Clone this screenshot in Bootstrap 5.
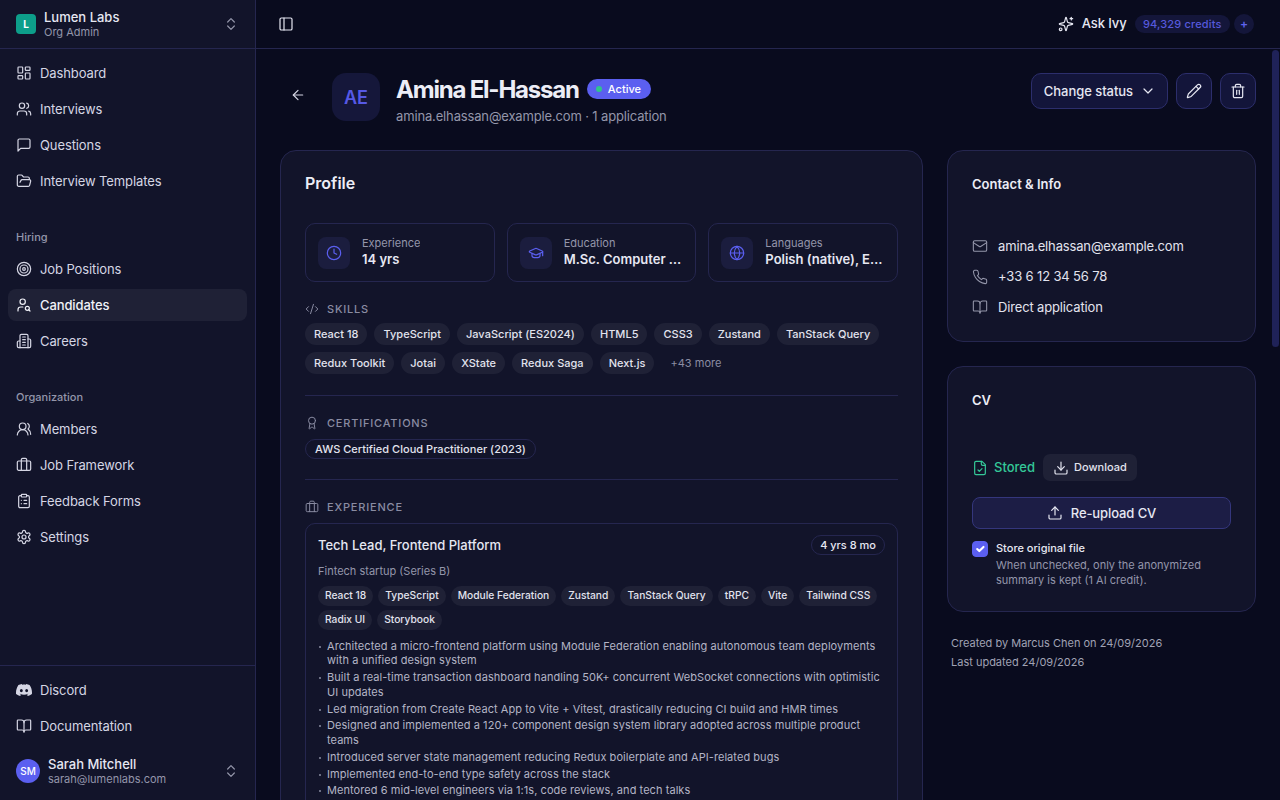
<!DOCTYPE html>
<html lang="en" data-bs-theme="dark">
<head>
  <meta charset="UTF-8" />
  <meta name="viewport" content="width=device-width, initial-scale=1" />
  <title>Amina El-Hassan | Lumen Labs</title>
  <link href="https://cdn.jsdelivr.net/npm/bootstrap@5.3.3/dist/css/bootstrap.min.css" rel="stylesheet" />
  <style>
    html, body {
      height: 100%;
      overflow: hidden;
    }

    body {
      background: #090b1e;
      color: #e6e7f2;
      font-family: Inter, "Liberation Sans", sans-serif;
      font-size: 14px;
    }

    .ico {
      width: 16px;
      height: 16px;
      flex: none;
      fill: none;
      stroke: currentColor;
      stroke-width: 1.8;
      stroke-linecap: round;
      stroke-linejoin: round;
    }

    /* sidebar */
    .side {
      width: 256px;
      flex: none;
      background: #12142a;
      border-right: 1px solid #25264f;
    }

    .side-top {
      height: 49px;
      padding: 0 16px;
      border-bottom: 1px solid #25264f;
    }

    .org-logo {
      width: 20px;
      height: 20px;
      border-radius: 4px;
      background: #0d9e8a;
      color: #fff;
      font-size: 10px;
      font-weight: 700;
    }

    .line-main {
      font-size: 13px;
      font-weight: 500;
      line-height: 14px;
      margin: 1px 0;
      color: #e6e7f2;
    }

    .line-sub {
      font-size: 11px;
      line-height: 15px;
      color: #9496aa;
    }

    .updown {
      color: #9496aa;
    }

    .side-nav {
      padding: 8px 8px 0;
      gap: 4px;
    }

    .side-nav .nav-link {
      height: 32px;
      padding: 0 8px;
      gap: 8px;
      color: #d5d6e4;
      font-size: 13px;
      letter-spacing: -.1px;
      border-radius: 8px;
      display: flex;
      align-items: center;
    }

    .side-nav .nav-link.on {
      background: #1f2136;
      color: #f0f1f8;
      font-weight: 500;
    }

    .lbl {
      padding-top: 2px;
    }

    .side-label {
      height: 32px;
      padding: 0 8px;
      margin: 20px 0 -4px;
      font-size: 11px;
      font-weight: 500;
      color: #9496aa;
      display: flex;
      align-items: center;
    }

    .side-foot {
      border-top: 1px solid #25264f;
    }

    .side-user {
      height: 58px;
      padding: 0 16px;
    }

    .user-dot {
      width: 24px;
      height: 24px;
      border-radius: 50%;
      background: #5b5ff0;
      color: #fff;
      font-size: 10px;
      font-weight: 500;
    }

    /* top bar */
    .topbar {
      height: 49px;
      flex: none;
      padding: 0 26px 0 22px;
      border-bottom: 1px solid #25264f;
    }

    .ask-ivy {
      font-size: 13px;
      font-weight: 500;
      letter-spacing: -.1px;
      color: #e6e7f2;
    }

    .credit-pill {
      height: 18px;
      padding: 0 8.5px;
      border-radius: 9px;
      background: #14163a;
      color: #5659dc;
      font-size: 11px;
      font-weight: 500;
      letter-spacing: .15px;
    }

    .plus-dot {
      width: 20px;
      height: 20px;
      border-radius: 50%;
      background: #14163a;
      color: #5f63ee;
      font-size: 12px;
      font-weight: 600;
    }

    /* scrolling column, the headless browser hides the real bar so the thumb is drawn */
    .scroller {
      overflow-y: auto;
    }

    .scroll-thumb {
      position: absolute;
      top: 50px;
      right: 1px;
      width: 7px;
      height: 297px;
      border-radius: 4px;
      background: #1f2258;
    }

    .page-wrap {
      min-height: 1899px;
      padding: 24px;
    }

    .back-btn {
      width: 36px;
      height: 44px;
      color: #d5d6e4;
    }

    .big-avatar {
      width: 48px;
      height: 48px;
      border-radius: 14px;
      background: #15173a;
      color: #5659e6;
      font-size: 18px;
      font-weight: 600;
    }

    .person-name {
      font-size: 24px;
      font-weight: 700;
      letter-spacing: -1.2px;
      line-height: 32px;
      color: #eceDF6;
      margin: 1px 0 0;
    }

    .status-pill {
      height: 20px;
      margin-top: -1px;
      padding: 0 10px 0 9px;
      border-radius: 10px;
      background: #5b5ff0;
      color: #fff;
      font-size: 11px;
      font-weight: 500;
      gap: 6px;
    }

    .status-dot {
      width: 6px;
      height: 6px;
      border-radius: 50%;
      background: #2fc48d;
    }

    .person-sub {
      font-size: 13px;
      letter-spacing: -.15px;
      line-height: 20px;
      color: #9496aa;
    }

    .act-btn {
      height: 36px;
      background: #13153a;
      border: 1px solid #2c2e6c;
      border-radius: 10px;
      color: #e6e7f2;
      font-size: 13px;
      font-weight: 500;
      letter-spacing: -.05px;
      padding: 0 11px 0 12px;
      gap: 7px;
    }

    .act-btn.square {
      width: 36px;
      padding: 0;
      justify-content: center;
    }

    .pane {
      background: #12142a;
      border: 1px solid #25264f;
      border-radius: 16px;
      padding: 24px;
      color: #e6e7f2;
    }

    .pane-title {
      font-size: 16px;
      font-weight: 600;
      line-height: 16px;
      margin-bottom: 32px;
      color: #eceDF6;
    }

    .tile-row {
      gap: 12px;
    }

    .tile {
      flex: 1 1 0;
      min-width: 0;
      height: 59px;
      padding: 0 12px;
      gap: 12px;
      border: 1px solid #25264f;
      border-radius: 10px;
    }

    .tile-ico {
      width: 32px;
      height: 32px;
      flex: none;
      border-radius: 8px;
      background: #1b1d3e;
      color: #5b5ff0;
    }

    .tile-text {
      padding-bottom: 2px;
    }

    .tile-key {
      font-size: 11px;
      line-height: 15px;
      color: #9496aa;
    }

    .tile-val {
      font-size: 13px;
      font-weight: 600;
      line-height: 17px;
      color: #e6e7f2;
    }

    .sect-head {
      margin-top: 20px;
      font-size: 11px;
      font-weight: 500;
      line-height: 14px;
      letter-spacing: .8px;
      text-transform: uppercase;
      color: #8a8ca2;
      gap: 8px;
    }

    .sect-head .ico {
      width: 14px;
      height: 14px;
      stroke-width: 1.7;
    }

    .chips {
      gap: 7px;
      margin-top: 7px;
    }

    .chips.spaced {
      margin-top: 9px;
    }

    .chip {
      height: 22px;
      padding: 0 9px;
      border-radius: 11px;
      background: #1f2136;
      color: #e2e3ee;
      font-size: 11px;
      font-weight: 500;
      letter-spacing: .02px;
    }

    .chip.more {
      background: none;
      color: #8a8ca2;
      font-weight: 400;
    }

    .chip.lined {
      height: 20px;
      background: none;
      border: 1px solid #25264f;
    }

    .sep {
      height: 1px;
      background: #25264f;
      margin: 21px 0 0;
    }

    .sep.near {
      margin-top: 20px;
    }

    .job-box {
      margin-top: 9px;
      padding: 12px;
      border: 1px solid #25264f;
      border-radius: 10px;
    }

    .job-title {
      font-size: 13px;
      font-weight: 500;
      color: #e6e7f2;
    }

    .job-time {
      height: 20px;
      padding: 0 8px;
      margin-top: -1px;
      border: 1px solid #25264f;
      border-radius: 10px;
      font-size: 11px;
      font-weight: 500;
    }

    .job-org {
      font-size: 11px;
      line-height: 14px;
      color: #9496aa;
      margin-top: 8px;
    }

    .job-box .chips {
      gap: 4px 5px;
      margin-top: 8px;
    }

    .job-box .chip {
      height: 20px;
      padding: 0 7px;
      font-size: 10.25px;
      letter-spacing: 0;
    }

    .job-list {
      list-style: none;
      margin: 9px 0 0;
      padding: 0;
      font-size: 11px;
      letter-spacing: .06px;
      line-height: 14.75px;
      color: #b4b5c6;
    }

    .job-list li {
      position: relative;
      padding-left: 9px;
      margin-bottom: 2px;
    }

    .job-list li::before {
      content: "";
      position: absolute;
      left: 1px;
      top: 7px;
      width: 2px;
      height: 2px;
      border-radius: 50%;
      background: #8a8ca2;
    }

    /* right column */
    .right-col {
      width: 309px;
      flex: none;
    }

    .pane.short {
      padding-bottom: 18.5px;
    }

    .pane.cv {
      padding-bottom: 23px;
    }

    .small-title {
      font-size: 13px;
      font-weight: 600;
      line-height: 18px;
      color: #eceDF6;
      margin-bottom: 38px;
    }

    .small-title.far {
      margin-bottom: 45px;
    }

    .info-row {
      gap: 10px;
      height: 30.5px;
      font-size: 13px;
      letter-spacing: -.15px;
      color: #e2e3ee;
    }

    .info-row .ico {
      color: #9496aa;
      stroke-width: 1.6;
    }

    .stored {
      color: #34c898;
      font-size: 13px;
      font-weight: 500;
      gap: 6px;
    }

    .dl-btn {
      height: 27px;
      padding: 0 10px;
      gap: 5px;
      border: 0;
      border-radius: 7px;
      background: #1f2136;
      color: #e2e3ee;
      font-size: 11px;
      font-weight: 500;
    }

    .up-btn {
      height: 32px;
      gap: 8px;
      background: #1c1d45;
      border: 1px solid #34367c;
      border-radius: 8px;
      color: #e6e7f2;
      font-size: 13px;
      font-weight: 500;
      letter-spacing: -.1px;
    }

    .keep-check,
    .keep-check:checked {
      width: 16px;
      height: 16px;
      margin: 0;
      flex: none;
      border-radius: 4px;
      background-color: #5b5ff0;
      border-color: #5b5ff0;
    }

    .keep-main {
      font-size: 11px;
      font-weight: 500;
      line-height: 14px;
      color: #e6e7f2;
    }

    .keep-sub {
      font-size: 11px;
      line-height: 15px;
      margin-top: 3px;
      color: #9496aa;
    }

    .stamp {
      margin-top: -2px;
      padding: 0 4px;
      font-size: 11px;
      line-height: 19px;
      color: #a0a2b4;
    }
  </style>
</head>
<body>

<!-- icons -->
<svg width="0" height="0" class="d-none">
  <symbol id="i-dash" viewBox="0 0 24 24"><rect width="7" height="9" x="3" y="3" rx="1"/><rect width="7" height="5" x="14" y="3" rx="1"/><rect width="7" height="9" x="14" y="12" rx="1"/><rect width="7" height="5" x="3" y="16" rx="1"/></symbol>
  <symbol id="i-users" viewBox="0 0 24 24"><path d="M16 21v-2a4 4 0 0 0-4-4H6a4 4 0 0 0-4 4v2"/><circle cx="9" cy="7" r="4"/><path d="M22 21v-2a4 4 0 0 0-3-3.87"/><path d="M16 3.13a4 4 0 0 1 0 7.75"/></symbol>
  <symbol id="i-msg" viewBox="0 0 24 24"><path d="M21 15a2 2 0 0 1-2 2H7l-4 4V5a2 2 0 0 1 2-2h14a2 2 0 0 1 2 2z"/></symbol>
  <symbol id="i-folder" viewBox="0 0 24 24"><path d="m6 14 1.5-2.9A2 2 0 0 1 9.24 10H20a2 2 0 0 1 1.94 2.5l-1.54 6a2 2 0 0 1-1.95 1.5H4a2 2 0 0 1-2-2V5a2 2 0 0 1 2-2h3.9a2 2 0 0 1 1.69.9l.81 1.2a2 2 0 0 0 1.67.9H18a2 2 0 0 1 2 2v2"/></symbol>
  <symbol id="i-target" viewBox="0 0 24 24"><circle cx="12" cy="12" r="10"/><circle cx="12" cy="12" r="6"/><circle cx="12" cy="12" r="2"/></symbol>
  <symbol id="i-usearch" viewBox="0 0 24 24"><circle cx="10" cy="7" r="4"/><path d="M10.3 15H7a4 4 0 0 0-4 4v2"/><circle cx="17" cy="17" r="3"/><path d="m21 21-1.9-1.9"/></symbol>
  <symbol id="i-building" viewBox="0 0 24 24"><path d="M6 22V4a2 2 0 0 1 2-2h8a2 2 0 0 1 2 2v18Z"/><path d="M6 12H4a2 2 0 0 0-2 2v6a2 2 0 0 0 2 2h2"/><path d="M18 9h2a2 2 0 0 1 2 2v9a2 2 0 0 1-2 2h-2"/><path d="M10 6h4"/><path d="M10 10h4"/><path d="M10 14h4"/><path d="M10 18h4"/></symbol>
  <symbol id="i-members" viewBox="0 0 24 24"><path d="M18 21a8 8 0 0 0-16 0"/><circle cx="10" cy="8" r="5"/><path d="M22 20c0-3.37-2-6.5-4-8a5 5 0 0 0-.45-8.3"/></symbol>
  <symbol id="i-case" viewBox="0 0 24 24"><path d="M16 20V4a2 2 0 0 0-2-2h-4a2 2 0 0 0-2 2v16"/><rect width="20" height="14" x="2" y="6" rx="2"/></symbol>
  <symbol id="i-clip" viewBox="0 0 24 24"><rect width="8" height="4" x="8" y="2" rx="1"/><path d="M16 4h2a2 2 0 0 1 2 2v14a2 2 0 0 1-2 2H6a2 2 0 0 1-2-2V6a2 2 0 0 1 2-2h2"/><path d="M12 11h4"/><path d="M12 16h4"/><path d="M8 11h.01"/><path d="M8 16h.01"/></symbol>
  <symbol id="i-gear" viewBox="0 0 24 24"><path d="M12.22 2h-.44a2 2 0 0 0-2 2v.18a2 2 0 0 1-1 1.73l-.43.25a2 2 0 0 1-2 0l-.15-.08a2 2 0 0 0-2.73.73l-.22.38a2 2 0 0 0 .73 2.73l.15.1a2 2 0 0 1 1 1.72v.51a2 2 0 0 1-1 1.74l-.15.09a2 2 0 0 0-.73 2.73l.22.38a2 2 0 0 0 2.73.73l.15-.08a2 2 0 0 1 2 0l.43.25a2 2 0 0 1 1 1.73V20a2 2 0 0 0 2 2h.44a2 2 0 0 0 2-2v-.18a2 2 0 0 1 1-1.73l.43-.25a2 2 0 0 1 2 0l.15.08a2 2 0 0 0 2.73-.73l.22-.39a2 2 0 0 0-.73-2.73l-.15-.08a2 2 0 0 1-1-1.74v-.5a2 2 0 0 1 1-1.74l.15-.09a2 2 0 0 0 .73-2.73l-.22-.38a2 2 0 0 0-2.73-.73l-.15.08a2 2 0 0 1-2 0l-.43-.25a2 2 0 0 1-1-1.73V4a2 2 0 0 0-2-2z"/><circle cx="12" cy="12" r="3"/></symbol>
  <symbol id="i-book" viewBox="0 0 24 24"><path d="M12 7v14"/><path d="M3 18a1 1 0 0 1-1-1V4a1 1 0 0 1 1-1h5a4 4 0 0 1 4 4 4 4 0 0 1 4-4h5a1 1 0 0 1 1 1v13a1 1 0 0 1-1 1h-6a3 3 0 0 0-3 3 3 3 0 0 0-3-3z"/></symbol>
  <symbol id="i-updown" viewBox="0 0 24 24"><path d="m7 15 5 5 5-5"/><path d="m7 9 5-5 5 5"/></symbol>
  <symbol id="i-panel" viewBox="0 0 24 24"><rect width="18" height="18" x="3" y="3" rx="2"/><path d="M9 3v18"/></symbol>
  <symbol id="i-spark" viewBox="0 0 24 24"><path d="M9.937 15.5A2 2 0 0 0 8.5 14.063l-6.135-1.582a.5.5 0 0 1 0-.962L8.5 9.936A2 2 0 0 0 9.937 8.5l1.582-6.135a.5.5 0 0 1 .963 0L14.063 8.5A2 2 0 0 0 15.5 9.937l6.135 1.581a.5.5 0 0 1 0 .964L15.5 14.063a2 2 0 0 0-1.437 1.437l-1.582 6.135a.5.5 0 0 1-.963 0z"/><path d="M20 2v4"/><path d="M22 4h-4"/><circle cx="4" cy="20" r="2"/></symbol>
  <symbol id="i-back" viewBox="0 0 24 24"><path d="m12 19-7-7 7-7"/><path d="M19 12H5"/></symbol>
  <symbol id="i-down" viewBox="0 0 24 24"><path d="m6 9 6 6 6-6"/></symbol>
  <symbol id="i-pencil" viewBox="0 0 24 24"><path d="M21.174 6.812a1 1 0 0 0-3.986-3.987L3.842 16.174a2 2 0 0 0-.5.83l-1.321 4.352a.5.5 0 0 0 .623.622l4.353-1.32a2 2 0 0 0 .83-.497z"/><path d="m15 5 4 4"/></symbol>
  <symbol id="i-trash" viewBox="0 0 24 24"><path d="M3 6h18"/><path d="M19 6v14c0 1-1 2-2 2H7c-1 0-2-1-2-2V6"/><path d="M8 6V4c0-1 1-2 2-2h4c1 0 2 1 2 2v2"/><path d="M10 11v6"/><path d="M14 11v6"/></symbol>
  <symbol id="i-clock" viewBox="0 0 24 24"><circle cx="12" cy="12" r="10"/><path d="M12 6v6l4 2"/></symbol>
  <symbol id="i-cap" viewBox="0 0 24 24"><path d="M21.42 10.922a1 1 0 0 0-.019-1.838L12.83 5.18a2 2 0 0 0-1.66 0L2.6 9.08a1 1 0 0 0 0 1.832l8.57 3.908a2 2 0 0 0 1.66 0z"/><path d="M22 10v6"/><path d="M6 12.5V16a6 3 0 0 0 12 0v-3.5"/></symbol>
  <symbol id="i-globe" viewBox="0 0 24 24"><circle cx="12" cy="12" r="10"/><path d="M12 2a14.5 14.5 0 0 0 0 20 14.5 14.5 0 0 0 0-20"/><path d="M2 12h20"/></symbol>
  <symbol id="i-code" viewBox="0 0 24 24"><path d="m18 16 4-4-4-4"/><path d="m6 8-4 4 4 4"/><path d="m14.5 4-5 16"/></symbol>
  <symbol id="i-award" viewBox="0 0 24 24"><path d="m15.477 12.89 1.515 8.526a.5.5 0 0 1-.81.47l-3.58-2.687a1 1 0 0 0-1.197 0l-3.586 2.686a.5.5 0 0 1-.81-.469l1.514-8.526"/><circle cx="12" cy="8" r="6"/></symbol>
  <symbol id="i-mail" viewBox="0 0 24 24"><rect width="20" height="16" x="2" y="4" rx="2"/><path d="m22 7-8.97 5.7a1.94 1.94 0 0 1-2.06 0L2 7"/></symbol>
  <symbol id="i-phone" viewBox="0 0 24 24"><path d="M22 16.92v3a2 2 0 0 1-2.18 2 19.79 19.79 0 0 1-8.63-3.07 19.5 19.5 0 0 1-6-6 19.79 19.79 0 0 1-3.07-8.67A2 2 0 0 1 4.11 2h3a2 2 0 0 1 2 1.72 12.84 12.84 0 0 0 .7 2.81 2 2 0 0 1-.45 2.11L8.09 9.91a16 16 0 0 0 6 6l1.27-1.27a2 2 0 0 1 2.11-.45 12.84 12.84 0 0 0 2.81.7A2 2 0 0 1 22 16.92z"/></symbol>
  <symbol id="i-filecheck" viewBox="0 0 24 24"><path d="M15 2H6a2 2 0 0 0-2 2v16a2 2 0 0 0 2 2h12a2 2 0 0 0 2-2V7Z"/><path d="M14 2v4a2 2 0 0 0 2 2h4"/><path d="m9 15 2 2 4-4"/></symbol>
  <symbol id="i-download" viewBox="0 0 24 24"><path d="M21 15v4a2 2 0 0 1-2 2H5a2 2 0 0 1-2-2v-4"/><path d="m7 10 5 5 5-5"/><path d="M12 15V3"/></symbol>
  <symbol id="i-upload" viewBox="0 0 24 24"><path d="M21 15v4a2 2 0 0 1-2 2H5a2 2 0 0 1-2-2v-4"/><path d="m17 8-5-5-5 5"/><path d="M12 3v12"/></symbol>
</svg>

<div class="d-flex vh-100">

  <!-- Sidebar -->
  <aside class="side d-flex flex-column">
    <div class="side-top d-flex align-items-center gap-2">
      <span class="org-logo d-flex align-items-center justify-content-center">L</span>
      <div class="flex-grow-1">
        <div class="line-main">Lumen Labs</div>
        <div class="line-sub">Org Admin</div>
      </div>
      <svg class="ico updown"><use href="#i-updown"/></svg>
    </div>

    <nav class="nav flex-column flex-nowrap side-nav flex-grow-1">
      <a class="nav-link" href="#"><svg class="ico"><use href="#i-dash"/></svg><span class="lbl">Dashboard</span></a>
      <a class="nav-link" href="#"><svg class="ico"><use href="#i-users"/></svg><span class="lbl">Interviews</span></a>
      <a class="nav-link" href="#"><svg class="ico"><use href="#i-msg"/></svg><span class="lbl">Questions</span></a>
      <a class="nav-link" href="#"><svg class="ico"><use href="#i-folder"/></svg><span class="lbl">Interview Templates</span></a>
      <div class="side-label">Hiring</div>
      <a class="nav-link" href="#"><svg class="ico"><use href="#i-target"/></svg><span class="lbl">Job Positions</span></a>
      <a class="nav-link on" href="#"><svg class="ico"><use href="#i-usearch"/></svg><span class="lbl">Candidates</span></a>
      <a class="nav-link" href="#"><svg class="ico"><use href="#i-building"/></svg><span class="lbl">Careers</span></a>
      <div class="side-label">Organization</div>
      <a class="nav-link" href="#"><svg class="ico"><use href="#i-members"/></svg><span class="lbl">Members</span></a>
      <a class="nav-link" href="#"><svg class="ico"><use href="#i-case"/></svg><span class="lbl">Job Framework</span></a>
      <a class="nav-link" href="#"><svg class="ico"><use href="#i-clip"/></svg><span class="lbl">Feedback Forms</span></a>
      <a class="nav-link" href="#"><svg class="ico"><use href="#i-gear"/></svg><span class="lbl">Settings</span></a>
    </nav>

    <div class="side-foot">
      <nav class="nav flex-column side-nav">
        <a class="nav-link" href="#">
          <svg class="ico" viewBox="0 0 24 24" style="fill:currentColor;stroke:none"><path d="M20.317 4.3698a19.7913 19.7913 0 00-4.8851-1.5152.0741.0741 0 00-.0785.0371c-.211.3753-.4447.8648-.6083 1.2495-1.8447-.2762-3.68-.2762-5.4868 0-.1636-.3933-.4058-.8742-.6177-1.2495a.077.077 0 00-.0785-.037 19.7363 19.7363 0 00-4.8852 1.515.0699.0699 0 00-.0321.0277C.5334 9.0458-.319 13.5799.0992 18.0578a.0824.0824 0 00.0312.0561c2.0528 1.5076 4.0413 2.4228 5.9929 3.0294a.0777.0777 0 00.0842-.0276c.4616-.6304.8731-1.2952 1.226-1.9942a.076.076 0 00-.0416-.1057c-.6528-.2476-1.2743-.5495-1.8722-.8923a.077.077 0 01-.0076-.1277c.1258-.0943.2517-.1923.3718-.2914a.0743.0743 0 01.0776-.0105c3.9278 1.7933 8.18 1.7933 12.0614 0a.0739.0739 0 01.0785.0095c.1202.099.246.1981.3728.2924a.077.077 0 01-.0066.1276 12.2986 12.2986 0 01-1.873.8914.0766.0766 0 00-.0407.1067c.3604.698.7719 1.3628 1.225 1.9932a.076.076 0 00.0842.0286c1.961-.6067 3.9495-1.5219 6.0023-3.0294a.077.077 0 00.0313-.0552c.5004-5.177-.8382-9.6739-3.5485-13.6604a.061.061 0 00-.0312-.0286zM8.02 15.3312c-1.1825 0-2.1569-1.0857-2.1569-2.419 0-1.3332.9555-2.4189 2.157-2.4189 1.2108 0 2.1757 1.0952 2.1568 2.419 0 1.3332-.9555 2.4189-2.1569 2.4189zm7.9748 0c-1.1825 0-2.1569-1.0857-2.1569-2.419 0-1.3332.9554-2.4189 2.1569-2.4189 1.2108 0 2.1757 1.0952 2.1568 2.419 0 1.3332-.946 2.4189-2.1568 2.4189Z"/></svg>
          <span class="lbl">Discord</span>
        </a>
        <a class="nav-link" href="#"><svg class="ico"><use href="#i-book"/></svg><span class="lbl">Documentation</span></a>
      </nav>
      <div class="side-user d-flex align-items-center gap-2">
        <span class="user-dot d-flex align-items-center justify-content-center">SM</span>
        <div class="flex-grow-1">
          <div class="line-main">Sarah Mitchell</div>
          <div class="line-sub">sarah@lumenlabs.com</div>
        </div>
        <svg class="ico updown"><use href="#i-updown"/></svg>
      </div>
    </div>
  </aside>

  <!-- Main -->
  <main class="flex-grow-1 d-flex flex-column position-relative" style="min-width:0">
    <header class="topbar d-flex align-items-center">
      <svg class="ico"><use href="#i-panel"/></svg>
      <div class="ms-auto d-flex align-items-center">
        <span class="ask-ivy d-flex align-items-center gap-2 me-2"><svg class="ico"><use href="#i-spark"/></svg>Ask Ivy</span>
        <span class="credit-pill d-flex align-items-center">94,329 credits</span>
        <span class="plus-dot d-flex align-items-center justify-content-center ms-1">+</span>
      </div>
    </header>

    <div class="scroller flex-grow-1">
      <div class="page-wrap d-flex flex-column">

        <!-- Person header -->
        <div class="d-flex align-items-start mb-4">
          <div class="back-btn d-flex align-items-center justify-content-center"><svg class="ico"><use href="#i-back"/></svg></div>
          <div class="big-avatar d-flex align-items-center justify-content-center ms-3 me-3">AE</div>
          <div>
            <div class="d-flex align-items-center gap-2">
              <h1 class="person-name">Amina El-Hassan</h1>
              <span class="badge status-pill d-flex align-items-center"><span class="status-dot"></span>Active</span>
            </div>
            <div class="person-sub">amina.elhassan@example.com · 1 application</div>
          </div>
          <div class="ms-auto d-flex gap-2">
            <button class="btn act-btn d-flex align-items-center" type="button"><span class="lbl">Change status</span><svg class="ico"><use href="#i-down"/></svg></button>
            <button class="btn act-btn square d-flex align-items-center" type="button"><svg class="ico"><use href="#i-pencil"/></svg></button>
            <button class="btn act-btn square d-flex align-items-center" type="button"><svg class="ico"><use href="#i-trash"/></svg></button>
          </div>
        </div>

        <div class="d-flex gap-4 align-items-stretch flex-grow-1">

          <!-- Profile -->
          <section class="card pane d-block flex-grow-1" style="min-width:0">
            <div class="pane-title">Profile</div>

            <div class="tile-row d-flex">
              <div class="tile d-flex align-items-center">
                <span class="tile-ico d-flex align-items-center justify-content-center"><svg class="ico"><use href="#i-clock"/></svg></span>
                <div class="tile-text text-truncate">
                  <div class="tile-key">Experience</div>
                  <div class="tile-val text-truncate">14 yrs</div>
                </div>
              </div>
              <div class="tile d-flex align-items-center">
                <span class="tile-ico d-flex align-items-center justify-content-center"><svg class="ico"><use href="#i-cap"/></svg></span>
                <div class="tile-text text-truncate">
                  <div class="tile-key">Education</div>
                  <div class="tile-val text-truncate">M.Sc. Computer Science</div>
                </div>
              </div>
              <div class="tile d-flex align-items-center">
                <span class="tile-ico d-flex align-items-center justify-content-center"><svg class="ico"><use href="#i-globe"/></svg></span>
                <div class="tile-text text-truncate">
                  <div class="tile-key">Languages</div>
                  <div class="tile-val text-truncate">Polish (native), English</div>
                </div>
              </div>
            </div>

            <div class="sect-head d-flex align-items-center"><svg class="ico"><use href="#i-code"/></svg>Skills</div>
            <div class="chips d-flex flex-wrap align-items-center">
              <span class="chip d-flex align-items-center">React 18</span>
              <span class="chip d-flex align-items-center">TypeScript</span>
              <span class="chip d-flex align-items-center">JavaScript (ES2024)</span>
              <span class="chip d-flex align-items-center">HTML5</span>
              <span class="chip d-flex align-items-center">CSS3</span>
              <span class="chip d-flex align-items-center">Zustand</span>
              <span class="chip d-flex align-items-center">TanStack Query</span>
              <span class="chip d-flex align-items-center">Redux Toolkit</span>
              <span class="chip d-flex align-items-center">Jotai</span>
              <span class="chip d-flex align-items-center">XState</span>
              <span class="chip d-flex align-items-center">Redux Saga</span>
              <span class="chip d-flex align-items-center">Next.js</span>
              <span class="chip more d-flex align-items-center">+43 more</span>
            </div>

            <div class="sep"></div>

            <div class="sect-head d-flex align-items-center"><svg class="ico"><use href="#i-award"/></svg>Certifications</div>
            <div class="chips spaced d-flex flex-wrap">
              <span class="chip lined d-flex align-items-center">AWS Certified Cloud Practitioner (2023)</span>
            </div>

            <div class="sep near"></div>

            <div class="sect-head d-flex align-items-center"><svg class="ico"><use href="#i-case"/></svg>Experience</div>
            <div class="job-box">
              <div class="d-flex align-items-center justify-content-between">
                <span class="job-title">Tech Lead, Frontend Platform</span>
                <span class="job-time d-flex align-items-center">4 yrs 8 mo</span>
              </div>
              <div class="job-org">Fintech startup (Series B)</div>
              <div class="chips d-flex flex-wrap">
                <span class="chip d-flex align-items-center">React 18</span>
                <span class="chip d-flex align-items-center">TypeScript</span>
                <span class="chip d-flex align-items-center">Module Federation</span>
                <span class="chip d-flex align-items-center">Zustand</span>
                <span class="chip d-flex align-items-center">TanStack Query</span>
                <span class="chip d-flex align-items-center">tRPC</span>
                <span class="chip d-flex align-items-center">Vite</span>
                <span class="chip d-flex align-items-center">Tailwind CSS</span>
                <span class="chip d-flex align-items-center">Radix UI</span>
                <span class="chip d-flex align-items-center">Storybook</span>
              </div>
              <ul class="job-list">
                <li>Architected a micro-frontend platform using Module Federation enabling autonomous team deployments with a unified design system</li>
                <li>Built a real-time transaction dashboard handling 50K+ concurrent WebSocket connections with optimistic UI updates</li>
                <li>Led migration from Create React App to Vite + Vitest, drastically reducing CI build and HMR times</li>
                <li>Designed and implemented a 120+ component design system library adopted across multiple product teams</li>
                <li>Introduced server state management reducing Redux boilerplate and API-related bugs</li>
                <li>Implemented end-to-end type safety across the stack</li>
                <li>Mentored 6 mid-level engineers via 1:1s, code reviews, and tech talks</li>
              </ul>
            </div>
          </section>

          <!-- Right column -->
          <div class="right-col d-flex flex-column gap-4">
            <section class="card pane short d-block">
              <div class="small-title">Contact &amp; Info</div>
              <div class="info-row d-flex align-items-center"><svg class="ico"><use href="#i-mail"/></svg>amina.elhassan@example.com</div>
              <div class="info-row d-flex align-items-center"><svg class="ico"><use href="#i-phone"/></svg>+33 6 12 34 56 78</div>
              <div class="info-row d-flex align-items-center"><svg class="ico"><use href="#i-book"/></svg>Direct application</div>
            </section>

            <section class="card pane cv d-block">
              <div class="small-title far">CV</div>
              <div class="d-flex align-items-center gap-2">
                <span class="stored d-flex align-items-center"><svg class="ico"><use href="#i-filecheck"/></svg>Stored</span>
                <button class="btn dl-btn d-flex align-items-center" type="button"><svg class="ico"><use href="#i-download"/></svg>Download</button>
              </div>
              <button class="btn up-btn w-100 d-flex align-items-center justify-content-center mt-3" type="button"><svg class="ico"><use href="#i-upload"/></svg><span class="lbl">Re-upload CV</span></button>
              <div class="d-flex gap-2 mt-2 pt-1">
                <input class="form-check-input keep-check" type="checkbox" checked id="keepFile" />
                <label for="keepFile">
                  <span class="d-block keep-main">Store original file</span>
                  <span class="d-block keep-sub">When unchecked, only the anonymized summary is kept (1 AI credit).</span>
                </label>
              </div>
            </section>

            <div class="stamp">
              <div>Created by Marcus Chen on 24/09/2026</div>
              <div>Last updated 24/09/2026</div>
            </div>
          </div>

        </div>
      </div>
    </div>

    <div class="scroll-thumb"></div>
  </main>
</div>

<script src="https://cdn.jsdelivr.net/npm/bootstrap@5.3.3/dist/js/bootstrap.bundle.min.js"></script>
</body>
</html>
